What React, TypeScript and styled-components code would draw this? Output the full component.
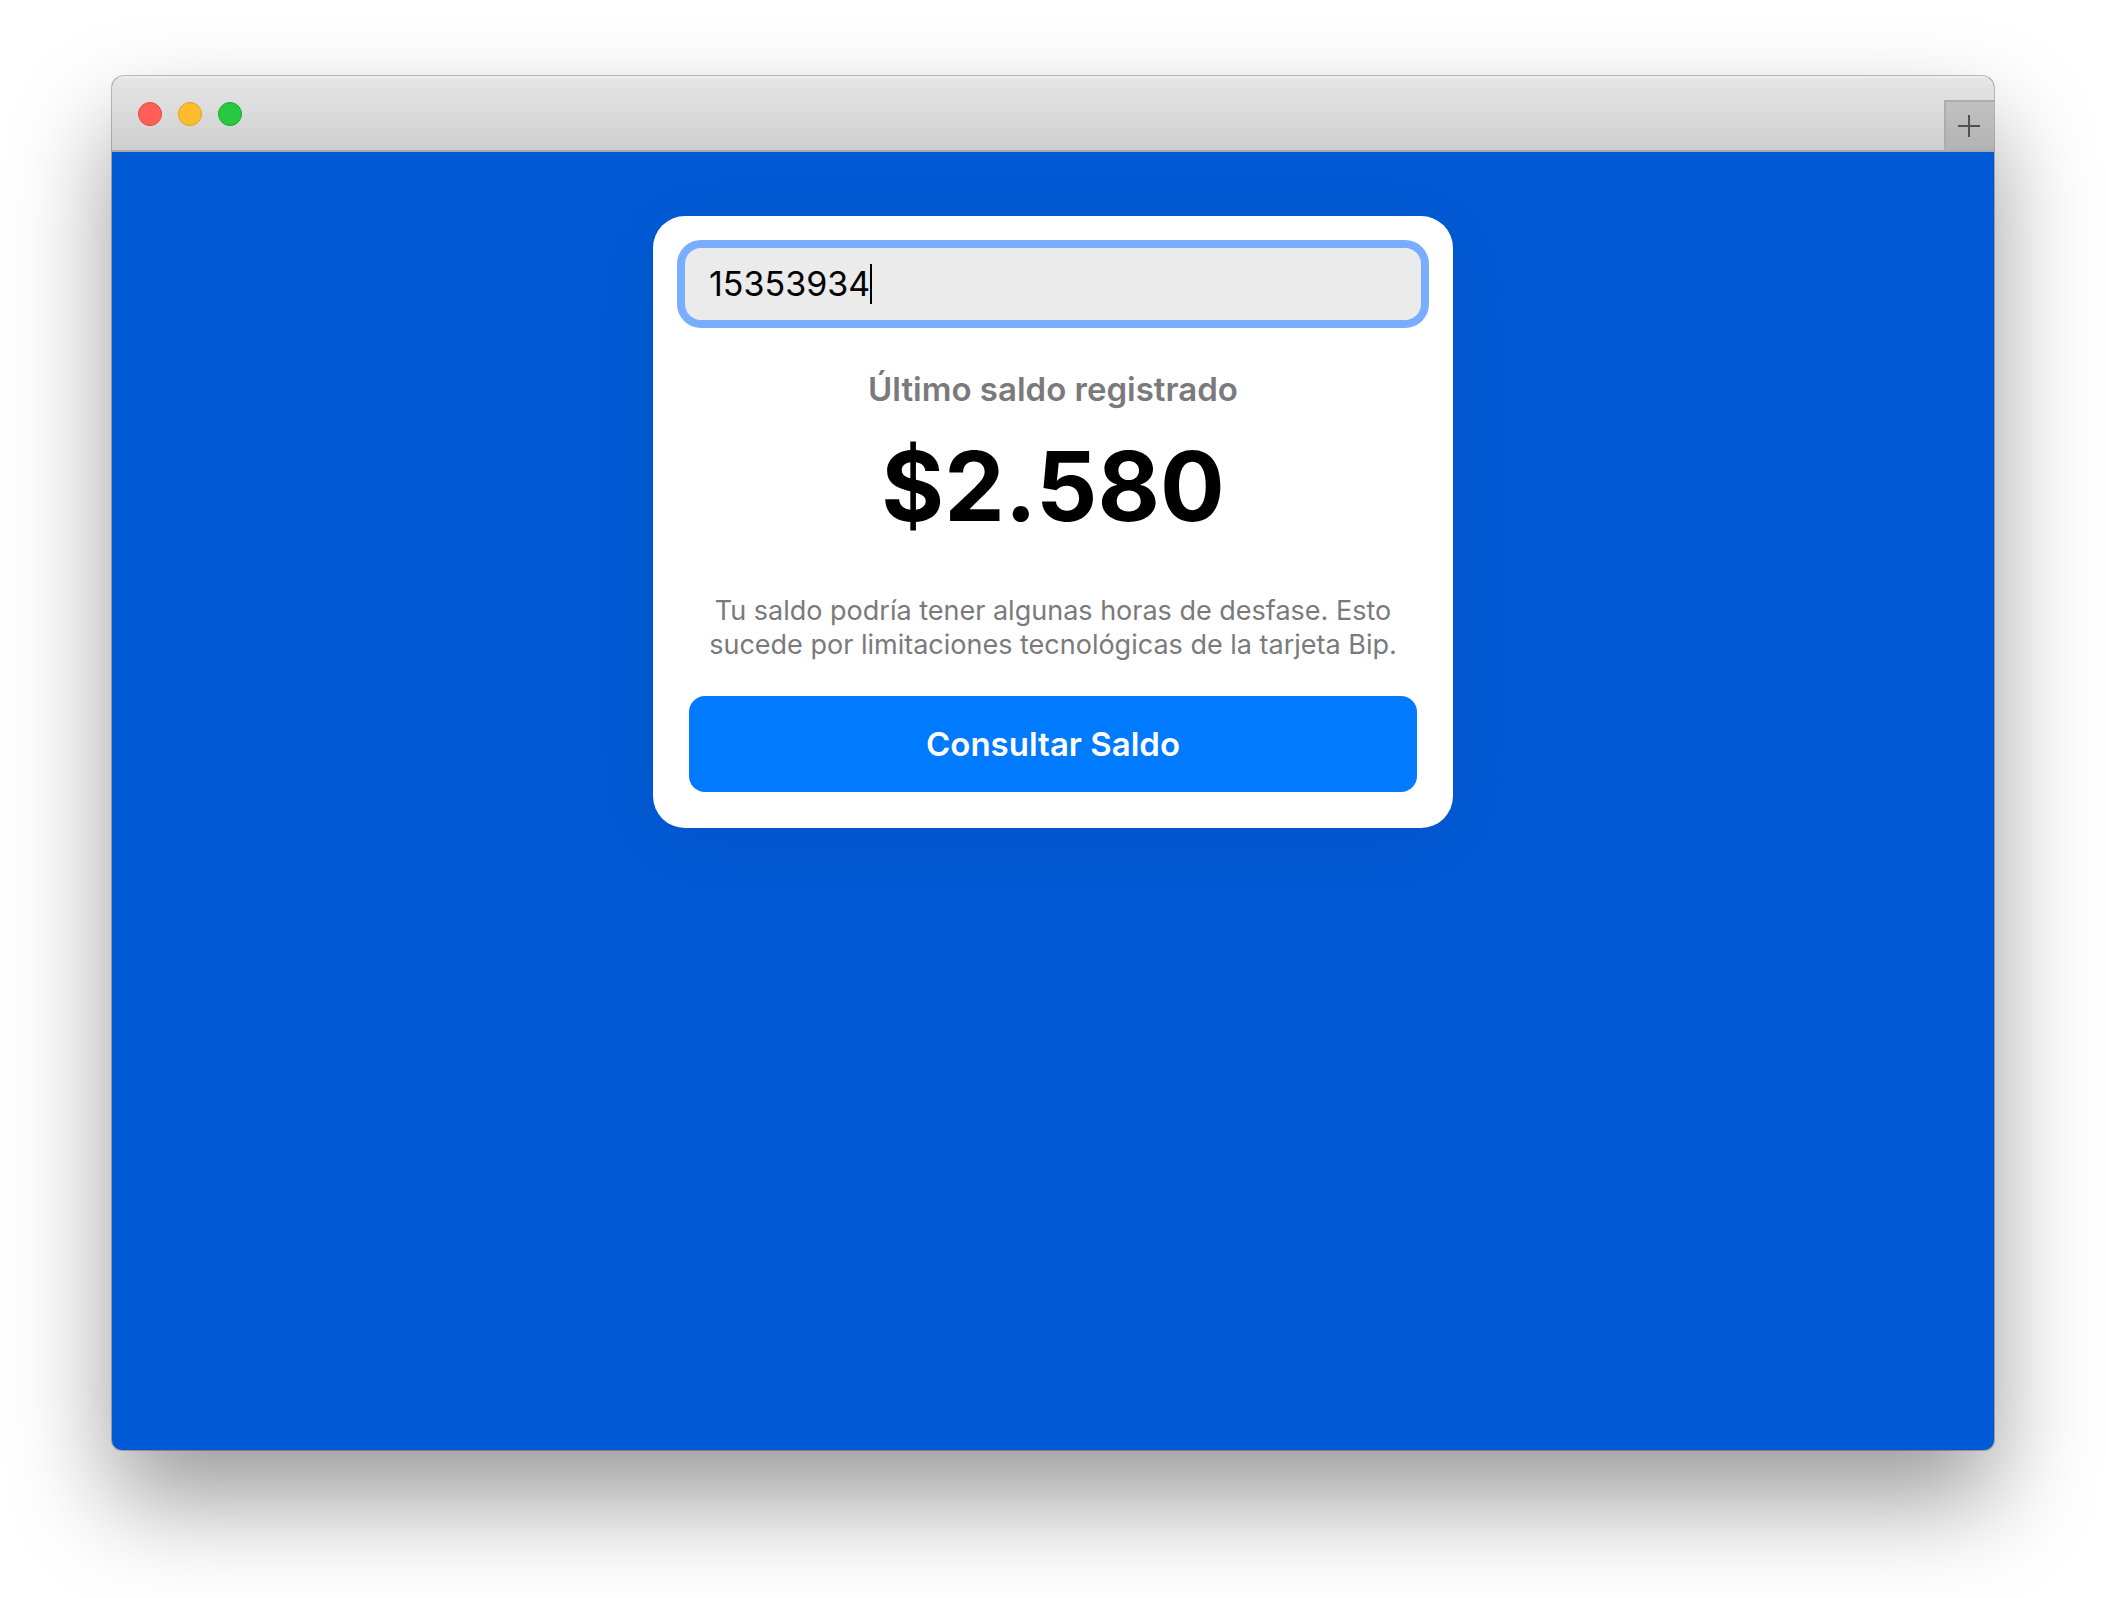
import React, { useState } from "react";
import styled, { createGlobalStyle } from "styled-components";

const GlobalStyle = createGlobalStyle`
  *, *::before, *::after { box-sizing: border-box; }
  body {
    margin: 0;
    background: #fff;
    font-family: Inter, "Liberation Sans", sans-serif;
  }
  button, input { font: inherit; }
`;

const Desktop = styled.div`
  display: flex;
  min-height: 100vh;
  padding: 76px 112px 148px;
`;

const BrowserWindow = styled.div`
  flex: 1;
  display: flex;
  flex-direction: column;
  overflow: hidden;
  border-radius: 12px 12px 10px 10px;
  background: #005ad6;
  box-shadow: 0 0 0 1px rgba(0, 0, 0, 0.25), 0 50px 100px rgba(0, 0, 0, 0.4);
`;

const TitleBar = styled.header`
  display: flex;
  align-items: center;
  justify-content: space-between;
  height: 76px;
  padding-left: 26px;
  border-bottom: 2px solid #acaaa8;
  background: linear-gradient(#e6e6e6, #cfcfcf);
  box-shadow: inset 0 2px 0 #ededed;
`;

const WindowControls = styled.div`
  display: flex;
  gap: 16px;
  padding-top: 2px;
`;

const Light = styled.button<{ $fill: string; $edge: string }>`
  width: 24px;
  height: 24px;
  padding: 0;
  border: 1px solid ${(p) => p.$edge};
  border-radius: 50%;
  background: ${(p) => p.$fill};
`;

const NewTab = styled.button`
  display: grid;
  place-items: center;
  align-self: flex-end;
  width: 50px;
  height: 50px;
  padding: 0;
  border: 0;
  border-top: 2px solid #acacac;
  background: linear-gradient(#c1c1c1, #b3b3b3);
  box-shadow: inset 2px 0 0 #acacac;
`;

const Page = styled.main`
  flex: 1;
  display: flex;
  justify-content: center;
  align-items: flex-start;
  padding: 64px 24px;
`;

const Card = styled.form`
  display: flex;
  flex-direction: column;
  width: 100%;
  max-width: 800px;
  padding: 24px 24px 36px;
  border-radius: 32px;
  background: #fff;
  box-shadow: 0 12px 80px rgba(0, 0, 0, 0.08);
  text-align: center;
`;

const Field = styled.label`
  display: flex;
  align-items: center;
  height: 88px;
  padding: 0 24px;
  border: 8px solid #78adff;
  border-radius: 24px;
  background: #ebebeb;
  cursor: text;
`;

const NumberInput = styled.input`
  field-sizing: content;
  max-width: 100%;
  padding: 0;
  border: 0;
  outline: 0;
  background: transparent;
  color: #000;
  caret-color: transparent;
  font-size: 34px;
  line-height: 40px;
`;

const Caret = styled.span`
  width: 2px;
  height: 40px;
  background: #000;
`;

const Title = styled.h1`
  margin: 40px 0 0;
  color: #7a7a7c;
  font-size: 33px;
  font-weight: 600;
  line-height: 42px;
`;

const Amount = styled.output`
  margin: 16px 0 0;
  color: #000;
  font-size: 96px;
  font-weight: 700;
  line-height: 120px;
`;

const Note = styled.p`
  margin: 48px 12px 34px;
  color: #7a7a7c;
  font-size: 27px;
  line-height: 34px;
`;

const Submit = styled.button`
  height: 96px;
  margin: 0 12px;
  padding: 0 24px;
  border: 0;
  border-radius: 16px;
  background: #007aff;
  color: #fff;
  font-size: 33px;
  font-weight: 600;
`;

const lights = [
  { name: "Cerrar", fill: "#ff5f57", edge: "#e2463f" },
  { name: "Minimizar", fill: "#ffbd2e", edge: "#e1a116" },
  { name: "Ampliar", fill: "#28c940", edge: "#12ac28" },
];

export default function App() {
  const [card, setCard] = useState("15353934");
  return (
    <>
      <GlobalStyle />
      <Desktop>
        <BrowserWindow>
          <TitleBar>
            <WindowControls>
              {lights.map((l) => (
                <Light key={l.name} type="button" aria-label={l.name} $fill={l.fill} $edge={l.edge} />
              ))}
            </WindowControls>
            <NewTab type="button" aria-label="Nueva pestaña">
              <svg width="22" height="22" viewBox="0 0 22 22" stroke="#505050" strokeWidth="2">
                <path d="M11 0v22M0 11h22" />
              </svg>
            </NewTab>
          </TitleBar>
          <Page>
            <Card onSubmit={(e) => e.preventDefault()}>
              <Field>
                <NumberInput
                  aria-label="Número de tarjeta"
                  inputMode="numeric"
                  value={card}
                  onChange={(e) => setCard(e.target.value)}
                />
                <Caret />
              </Field>
              <Title>Último saldo registrado</Title>
              <Amount>$2.580</Amount>
              <Note>
                Tu saldo podría tener algunas horas de desfase. Esto sucede por limitaciones
                tecnológicas de la tarjeta Bip.
              </Note>
              <Submit type="submit">Consultar Saldo</Submit>
            </Card>
          </Page>
        </BrowserWindow>
      </Desktop>
    </>
  );
}
